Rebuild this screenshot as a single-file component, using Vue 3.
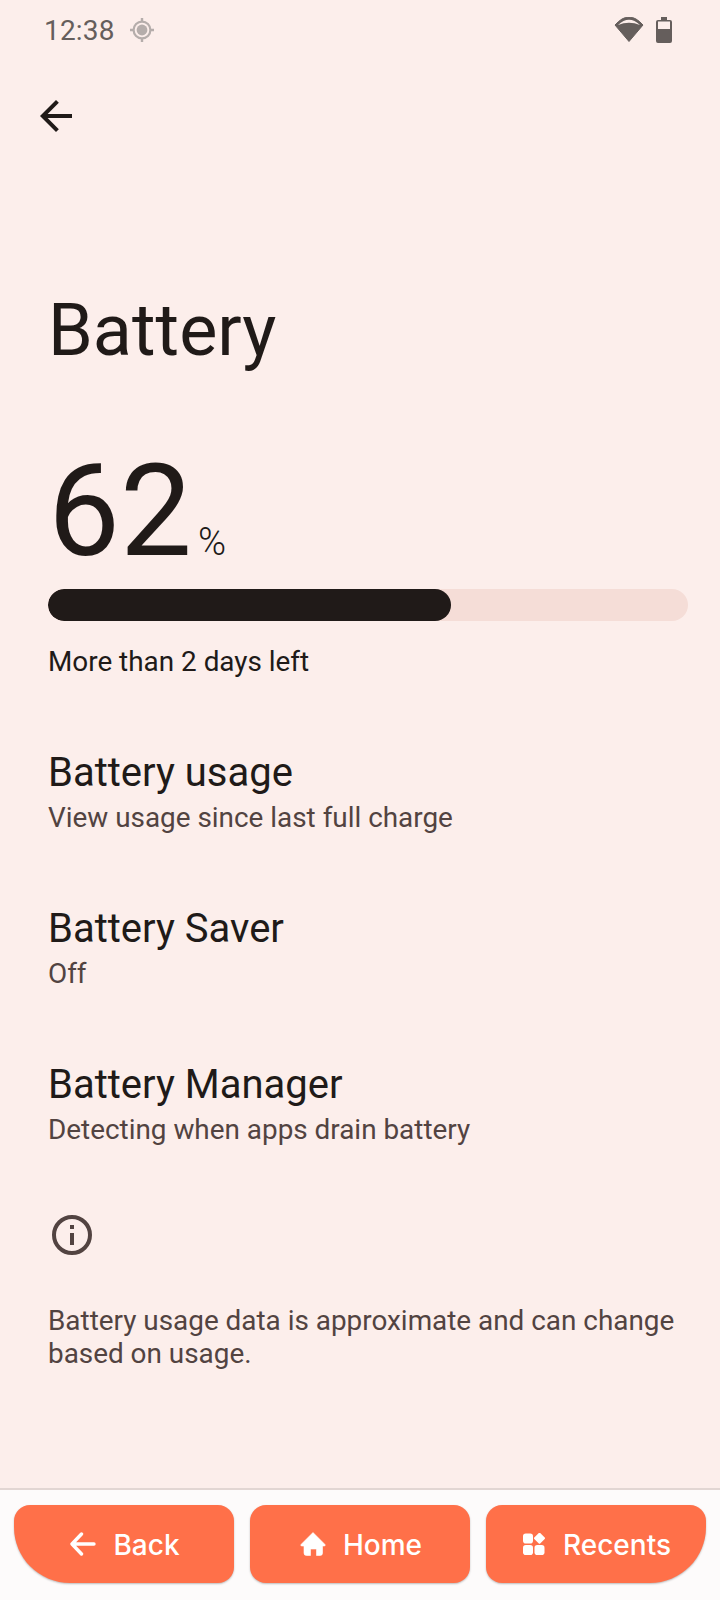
<template>
  <div class="screen">
    <div class="status">
      <span class="time">12:38</span>
      <svg class="loc" width="24" height="24" viewBox="0 0 24 24">
        <path d="M12 0v4M12 20v4M0 12h4M20 12h4" stroke="#b5adab" stroke-width="2.4" />
        <circle cx="12" cy="12" r="8.4" fill="none" stroke="#b5adab" stroke-width="2.2" />
        <circle cx="12" cy="12" r="5.4" fill="#b5adab" />
      </svg>
      <span class="spacer"></span>
      <svg width="30" height="26" viewBox="0 0 30 26">
        <path d="M15 24.5 L1 8 Q15 -8 29 8 Z" fill="#655e5c" stroke="#655e5c" stroke-linejoin="round" />
        <path d="M4 8 Q15 -2.5 26 8 Q15 3.5 4 8z" fill="#fceeeb" />
      </svg>
      <svg class="batt" width="16" height="26" viewBox="0 0 16 26">
        <path d="M5 0h6v3h3a2 2 0 0 1 2 2v19a2 2 0 0 1-2 2H2a2 2 0 0 1-2-2V5a2 2 0 0 1 2-2h3z" fill="#655e5c" />
        <rect x="2" y="4.5" width="12" height="7.5" fill="#fceeeb" />
      </svg>
    </div>

    <div class="toolbar">
      <svg width="48" height="48" viewBox="0 0 24 24">
        <path d="M20 11H7.83l5.59-5.59L12 4l-8 8 8 8 1.41-1.41L7.83 13H20v-2z" fill="#201a18" />
      </svg>
    </div>

    <h1 class="title">Battery</h1>

    <div class="level">
      <span class="num">62</span><span class="pct">%</span>
    </div>
    <div class="bar">
      <div class="fill" :style="{ width: level + '%' }"></div>
    </div>
    <p class="left">More than 2 days left</p>

    <div v-for="row in rows" :key="row.title" class="row">
      <div class="row-title">{{ row.title }}</div>
      <div class="row-sub">{{ row.sub }}</div>
    </div>

    <svg class="info" width="48" height="48" viewBox="0 0 24 24">
      <circle cx="12" cy="12" r="9" fill="none" stroke="#524341" stroke-width="2" />
      <path d="M11 11h2v6h-2zM11 7h2v2h-2z" fill="#524341" />
    </svg>
    <p class="note">Battery usage data is approximate and can change based on usage.</p>

    <div class="nav">
      <button class="nav-btn back">
        <svg width="26" height="24" viewBox="0 0 26 24">
          <path d="M11.5 2 2 12 11.5 22M3 12h21" fill="none" stroke="#fff" stroke-width="3.4" stroke-linecap="round" stroke-linejoin="round" />
        </svg>
        <span>Back</span>
      </button>
      <button class="nav-btn">
        <svg width="26" height="24" viewBox="0 0 26 24">
          <path d="M13 .5 25 12.5Q25.8 14 24 14H22.5V21Q22.5 23.5 20 23.5H16.5V17H10.5V23.5H6.5Q4 23.5 4 21V14H2Q.2 14 1 12.5Z" fill="#fff" stroke="#fff" stroke-width=".6" stroke-linejoin="round" />
        </svg>
        <span>Home</span>
      </button>
      <button class="nav-btn recents">
        <svg width="23" height="22" viewBox="0 0 23 22">
          <rect x="0" y="0.5" width="10" height="10" rx="2.8" fill="#fff" />
          <rect x="0" y="12" width="10" height="10" rx="2.8" fill="#fff" />
          <rect x="11.5" y="12" width="10" height="10" rx="2.8" fill="#fff" />
          <path d="M16.5 0.7 21 5.2 16.5 9.7 12 5.2z" fill="#fff" stroke="#fff" stroke-width="2" stroke-linejoin="round" />
        </svg>
        <span>Recents</span>
      </button>
    </div>
  </div>
</template>

<script setup>
const level = 63

const rows = [
  { title: 'Battery usage', sub: 'View usage since last full charge' },
  { title: 'Battery Saver', sub: 'Off' },
  { title: 'Battery Manager', sub: 'Detecting when apps drain battery' }
]
</script>

<style>
body {
  margin: 0;
}
</style>

<style scoped>
.screen {
  width: 720px;
  height: 1600px;
  background: #fceeeb;
  font-family: Roboto, "Noto Sans", sans-serif;
  color: #201a18;
  display: flex;
  flex-direction: column;
  overflow: hidden;
}

.status {
  height: 60px;
  padding: 0 48px 0 44px;
  display: flex;
  align-items: center;
  gap: 15px;
  color: #655e5c;
  font-size: 28px;
  box-sizing: border-box;
}

.spacer {
  flex: 1;
}

.batt {
  margin-left: -3px;
}

.time {
  letter-spacing: 0.2px;
}

.toolbar {
  height: 56px;
  margin-top: 32px;
  padding-left: 32px;
}

.title {
  margin: 135px 0 0 48px;
  font-size: 72px;
  line-height: 96px;
  font-weight: 400;
}

.level {
  margin: 62px 0 0 48px;
  height: 140px;
  line-height: 140px;
  white-space: nowrap;
}

.num {
  font-size: 128px;
}

.pct {
  font-size: 38px;
  font-weight: 300;
  margin-left: 6px;
}

.bar {
  margin: 8px 32px 0 48px;
  height: 32px;
  border-radius: 16px;
  background: #f5ddd7;
  overflow: hidden;
}

.fill {
  height: 100%;
  background: #201a18;
  border-radius: 16px;
}

.left {
  margin: 21px 48px 0;
  font-size: 27.88px;
  line-height: 40px;
}

.row {
  margin: 48px 48px 0;
  height: 108px;
}

.left + .row {
  margin-top: 66px;
}

.row-title {
  font-size: 40px;
  line-height: 50px;
}

.row-sub {
  font-size: 27.88px;
  line-height: 40px;
  color: #524341;
}

.info {
  margin: 43px 0 0 48px;
  flex: none;
}

.note {
  margin: 45px 32px 0 48px;
  font-size: 27.88px;
  line-height: 33px;
  color: #524341;
}

.nav {
  margin-top: auto;
  height: 112px;
  border-top: 2px solid #e2d6d3;
  background: #fdfbfb;
  padding: 15px 14px 0;
  box-sizing: border-box;
  display: flex;
  gap: 16px;
}

.nav-btn {
  flex: 1;
  height: 78px;
  border: none;
  border-radius: 16px;
  background: #ff7049;
  color: #fff;
  font-family: Inter, "Open Sans", sans-serif;
  font-size: 28px;
  font-weight: 500;
  display: flex;
  align-items: center;
  justify-content: center;
  gap: 17px;
  padding: 0 0 0 2px;
  box-shadow: 0 1px 2px rgba(0, 0, 0, 0.25);
}

.nav-btn span {
  padding-top: 2px;
}

.back {
  border-bottom-left-radius: 56px;
}

.recents {
  border-bottom-right-radius: 56px;
}
</style>
